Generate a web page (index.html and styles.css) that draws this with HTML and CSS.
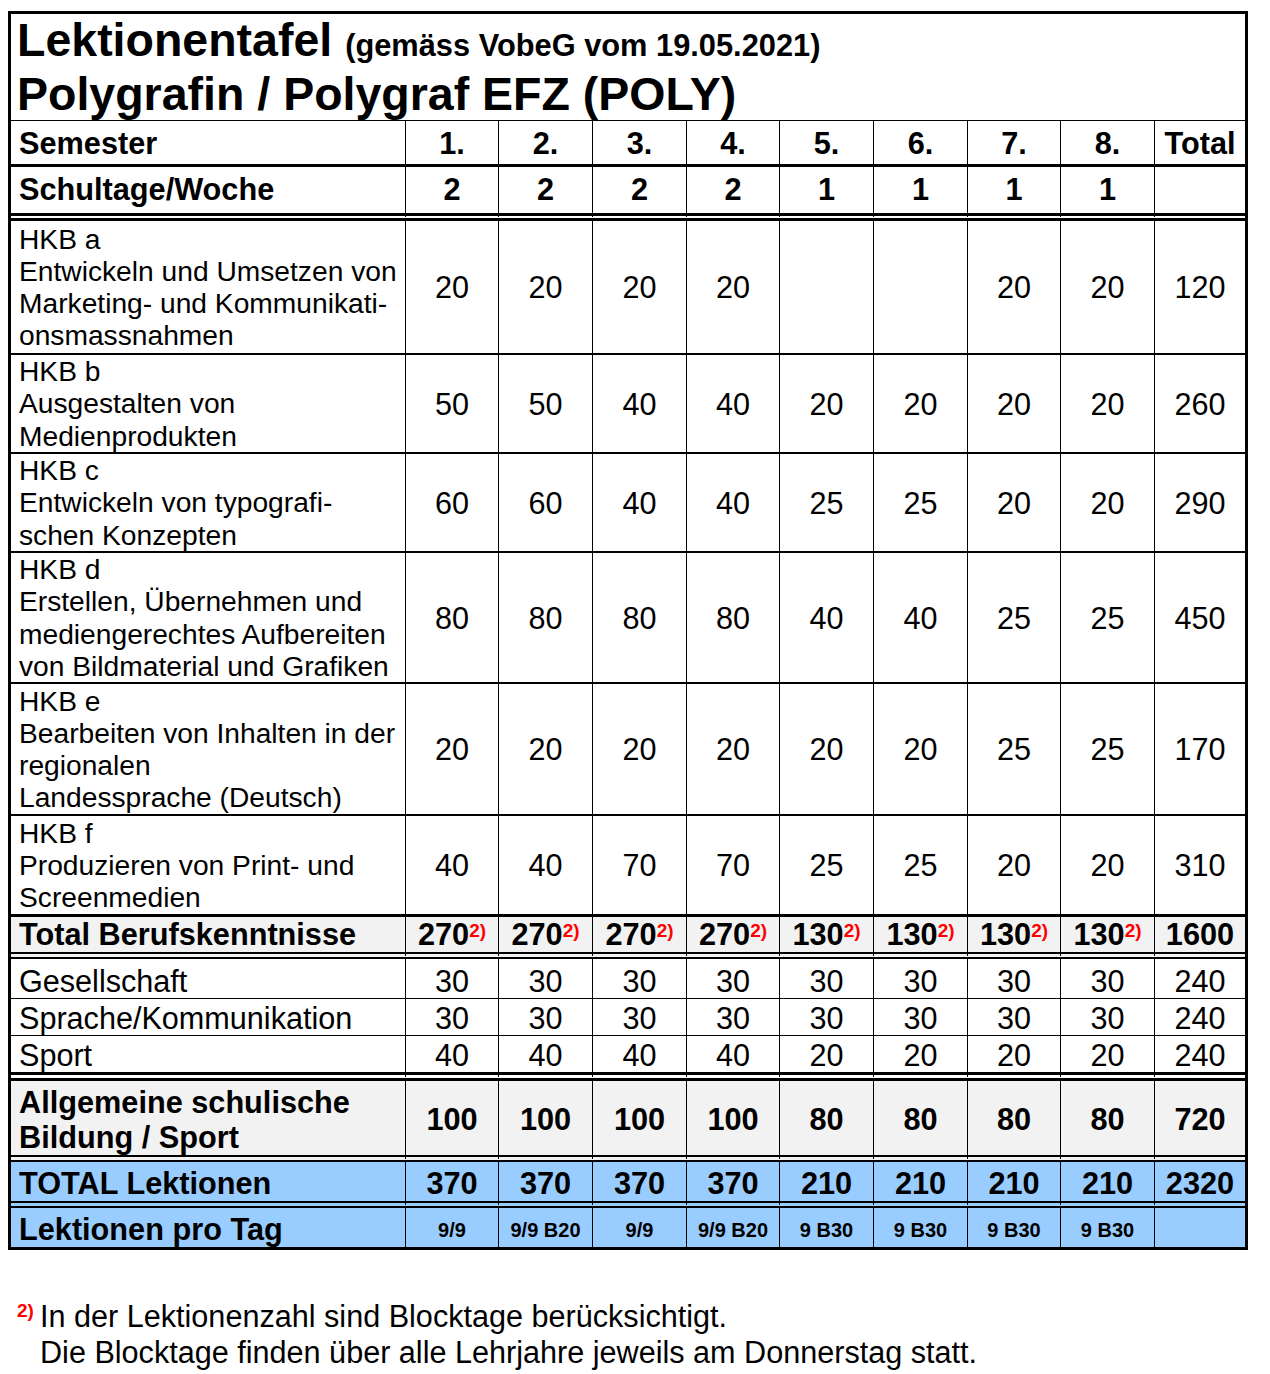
FILE: index.html
```html
<!DOCTYPE html>
<html lang="de">
<head>
<meta charset="utf-8">
<title>Lektionentafel Polygrafin / Polygraf EFZ</title>
<link rel="stylesheet" href="styles.css">
</head>
<body>
<div class="sheet">
  <div class="title">
    <div class="title-line"><span>Lektionentafel</span> <span class="t-small">(gemäss VobeG vom 19.05.2021)</span></div>
    <div class="title-line">Polygrafin / Polygraf EFZ (POLY)</div>
  </div>
  <table class="grid">
    <colgroup>
      <col class="c-label">
      <col class="c-93"><col class="c-94"><col class="c-94"><col class="c-93">
      <col class="c-94"><col class="c-94"><col class="c-93"><col class="c-94">
      <col class="c-total">
    </colgroup>
    <tr class="r-sem bold">
      <td class="lbl">Semester</td><td>1.</td><td>2.</td><td>3.</td><td>4.</td><td>5.</td><td>6.</td><td>7.</td><td>8.</td><td>Total</td>
    </tr>
    <tr class="r-days bold">
      <td class="lbl">Schultage/Woche</td><td>2</td><td>2</td><td>2</td><td>2</td><td>1</td><td>1</td><td>1</td><td>1</td><td></td>
    </tr>
    <tr class="r-hkb h-132">
      <td class="lbl hkb">HKB a<br>Entwickeln und Umsetzen von<br>Marketing- und Kommunikati-<br>onsmassnahmen</td><td>20</td><td>20</td><td>20</td><td>20</td><td></td><td></td><td>20</td><td>20</td><td>120</td>
    </tr>
    <tr class="r-hkb h-97">
      <td class="lbl hkb">HKB b<br>Ausgestalten von<br>Medienprodukten</td><td>50</td><td>50</td><td>40</td><td>40</td><td>20</td><td>20</td><td>20</td><td>20</td><td>260</td>
    </tr>
    <tr class="r-hkb h-97">
      <td class="lbl hkb">HKB c<br>Entwickeln von typografi-<br>schen Konzepten</td><td>60</td><td>60</td><td>40</td><td>40</td><td>25</td><td>25</td><td>20</td><td>20</td><td>290</td>
    </tr>
    <tr class="r-hkb h-129">
      <td class="lbl hkb">HKB d<br>Erstellen, Übernehmen und<br>mediengerechtes Aufbereiten<br>von Bildmaterial und Grafiken</td><td>80</td><td>80</td><td>80</td><td>80</td><td>40</td><td>40</td><td>25</td><td>25</td><td>450</td>
    </tr>
    <tr class="r-hkb h-130">
      <td class="lbl hkb">HKB e<br>Bearbeiten von Inhalten in der<br>regionalen<br>Landessprache (Deutsch)</td><td>20</td><td>20</td><td>20</td><td>20</td><td>20</td><td>20</td><td>25</td><td>25</td><td>170</td>
    </tr>
    <tr class="r-hkb r-hkb-last">
      <td class="lbl hkb">HKB f<br>Produzieren von Print- und<br>Screenmedien</td><td>40</td><td>40</td><td>70</td><td>70</td><td>25</td><td>25</td><td>20</td><td>20</td><td>310</td>
    </tr>
    <tr class="r-totalbk bold grey">
      <td class="lbl">Total Berufskenntnisse</td>
      <td>270<span class="fn">2)</span></td><td>270<span class="fn">2)</span></td><td>270<span class="fn">2)</span></td><td>270<span class="fn">2)</span></td>
      <td>130<span class="fn">2)</span></td><td>130<span class="fn">2)</span></td><td>130<span class="fn">2)</span></td><td>130<span class="fn">2)</span></td>
      <td>1600</td>
    </tr>
    <tr class="r-ges">
      <td class="lbl">Gesellschaft</td><td>30</td><td>30</td><td>30</td><td>30</td><td>30</td><td>30</td><td>30</td><td>30</td><td>240</td>
    </tr>
    <tr class="r-spr">
      <td class="lbl">Sprache/Kommunikation</td><td>30</td><td>30</td><td>30</td><td>30</td><td>30</td><td>30</td><td>30</td><td>30</td><td>240</td>
    </tr>
    <tr class="r-spo">
      <td class="lbl">Sport</td><td>40</td><td>40</td><td>40</td><td>40</td><td>20</td><td>20</td><td>20</td><td>20</td><td>240</td>
    </tr>
    <tr class="r-asb bold grey">
      <td class="lbl two">Allgemeine schulische<br>Bildung / Sport</td><td>100</td><td>100</td><td>100</td><td>100</td><td>80</td><td>80</td><td>80</td><td>80</td><td>720</td>
    </tr>
    <tr class="r-tot bold blue">
      <td class="lbl">TOTAL Lektionen</td><td>370</td><td>370</td><td>370</td><td>370</td><td>210</td><td>210</td><td>210</td><td>210</td><td>2320</td>
    </tr>
    <tr class="r-day bold blue">
      <td class="lbl">Lektionen pro Tag</td><td class="sm">9/9</td><td class="sm">9/9 B20</td><td class="sm">9/9</td><td class="sm">9/9 B20</td><td class="sm">9 B30</td><td class="sm">9 B30</td><td class="sm">9 B30</td><td class="sm">9 B30</td><td class="sm"></td>
    </tr>
  </table>
</div>
<div class="note">
  <span class="note-mark">2)</span>
  <div class="note-text">In der Lektionenzahl sind Blocktage berücksichtigt.<br>Die Blocktage finden über alle Lehrjahre jeweils am Donnerstag statt.</div>
</div>
</body>
</html>
```
FILE: styles.css
```css
html, body {
  margin: 0;
  padding: 0;
  background: #ffffff;
}
body {
  font-family: "Liberation Sans", Arial, sans-serif;
  color: #000000;
}
.sheet {
  margin: 11px 0 0 8px;
  width: 1234px;
  border: 3px solid #000000;
}
.title {
  padding: 2px 0 0 6px;
  height: 104px;
  border-bottom: 1px solid #000000;
  font-weight: bold;
}
.title-line {
  font-size: 46.5px;
  line-height: 49px;
  white-space: nowrap;
}
.t-small {
  font-size: 30.8px;
}
.grid {
  width: 1234px;
  table-layout: fixed;
  border-collapse: separate;
  border-spacing: 0;
}
.c-label { width: 395px; }
.c-93 { width: 93px; }
.c-94 { width: 94px; }
.c-total { width: 90px; }
.grid td {
  box-sizing: border-box;
  padding: 0;
  border-right: 1px solid #000000;
  text-align: center;
  vertical-align: middle;
  font-size: 30.6px;
  line-height: 34px;
  white-space: nowrap;
  overflow: hidden;
}
.grid td:last-child {
  border-right: none;
}
.grid td.lbl {
  text-align: left;
  padding-left: 8px;
}
.bold td {
  font-weight: bold;
  font-size: 30.7px;
}
.grey td {
  background: #f2f2f2;
}
.blue td {
  background: #99ccff;
}
.r-sem td { height: 46px; border-bottom: 3px solid #000000; padding-top: 2px; }
.r-days td { height: 54px; border-bottom: 8px double #000000; }
.r-hkb td { border-bottom: 2px solid #000000; }
.h-132 td { height: 134px; }
.h-97 td { height: 99px; }
.h-129 td { height: 131px; }
.h-130 td { height: 132px; }
.r-hkb-last td { height: 101px; border-bottom: 3px solid #000000; }
.grid td.hkb {
  font-size: 28.2px;
  line-height: 32.25px;
}
.r-totalbk td { height: 42px; border-bottom: 7px double #000000; }
.r-ges td { height: 40px; border-bottom: 1px solid #000000; padding-top: 4px; }
.r-spr td { height: 37px; border-bottom: 1px solid #000000; padding-top: 2px; }
.r-spo td { height: 45px; border-bottom: 9px double #000000; padding-top: 2px; }
.r-asb td { height: 81px; border-bottom: 7px double #000000; padding-top: 4px; }
.grid td.two { line-height: 35px; }
.r-tot td { height: 46px; border-bottom: 7px double #000000; padding-top: 4px; }
.r-day td { height: 39px; padding-top: 5px; }
.bold td.sm {
  font-size: 20px;
}
.fn {
  color: #ff0000;
  font-size: 19px;
  line-height: 0;
  vertical-align: 8px;
}
.note {
  display: flex;
  align-items: flex-start;
  margin-top: 48px;
  font-size: 30.6px;
  line-height: 36px;
}
.note-mark {
  margin-left: 17px;
  width: 23px;
  margin-top: 3px;
  color: #ff0000;
  font-weight: bold;
  font-size: 19px;
  line-height: 19px;
}
.note-text {
  white-space: nowrap;
}
```
